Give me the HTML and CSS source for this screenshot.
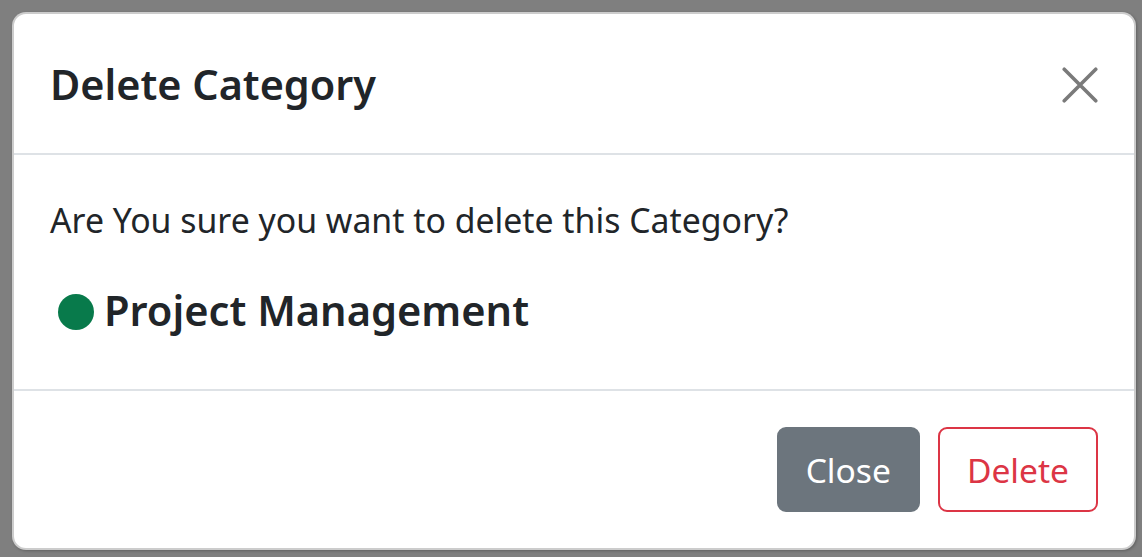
FILE: index.html
```html
<!DOCTYPE html>
<html lang="en">
<head>
<meta charset="utf-8">
<title>Delete Category</title>
<link rel="stylesheet" href="styles.css">
</head>
<body>
<div class="modal">
  <div class="modal-header">
    <h5 class="modal-title">Delete Category</h5>
    <button class="btn-close" aria-label="Close">
      <svg viewBox="0 0 16 16" width="36" height="36"><path d="M1 1L15 15M15 1L1 15" stroke="currentColor" stroke-width="1.6" stroke-linecap="round" fill="none"/></svg>
    </button>
  </div>
  <div class="modal-body">
    <p class="question">Are You sure you want to delete this Category?</p>
    <h5 class="category"><span class="dot"></span>Project Management</h5>
  </div>
  <div class="modal-footer">
    <button class="btn btn-secondary">Close</button>
    <button class="btn btn-outline-danger">Delete</button>
  </div>
</div>
</body>
</html>
```

FILE: styles.css
```css
html, body {
  margin: 0;
  padding: 0;
  background: #7f7f7f;
  height: 100%;
}
body {
  font-family: "Noto Sans", "Open Sans", sans-serif;
  color: #212529;
  padding: 12px 6px 10px 12px;
  box-sizing: border-box;
}
.modal {
  background: #fff;
  border: 2px solid rgba(0,0,0,0.2);
  border-radius: 14px;
  display: flex;
  flex-direction: column;
  box-shadow: 1px 1px 3px rgba(0,0,0,0.25);
}
.modal-header {
  display: flex;
  align-items: center;
  justify-content: space-between;
  padding: 37px 36px 35px;
  border-bottom: 2px solid #dee2e6;
}
.modal-title {
  margin: 0;
  font-size: 41.4px;
  font-weight: 600;
  line-height: 67px;
}
.btn-close {
  border: 0;
  background: none;
  padding: 0;
  width: 36px;
  height: 36px;
  color: #7a7a7a;
  display: flex;
  cursor: pointer;
}
.modal-body {
  padding: 36px;
}
.question {
  margin: 0 0 32px;
  font-size: 33.8px;
  line-height: 58px;
}
.category {
  margin: 0 0 14px;
  font-size: 41.6px;
  font-weight: 600;
  line-height: 58px;
  display: flex;
  align-items: center;
}
.dot {
  width: 36px;
  height: 36px;
  border-radius: 50%;
  background: #087a4b;
  margin-left: 8px;
  margin-right: 10px;
  margin-top: 4px;
  flex: none;
}
.modal-footer {
  display: flex;
  justify-content: flex-end;
  padding: 27px;
  border-top: 2px solid #dee2e6;
}
.btn {
  margin: 9px;
  font-family: inherit;
  font-size: 33.6px;
  line-height: 54px;
  padding: 13.5px 27px;
  border-radius: 9px;
  border: 2px solid transparent;
  cursor: pointer;
}
.btn-secondary {
  background: #6c757d;
  border-color: #6c757d;
  color: #fff;
}
.btn-outline-danger {
  background: #fff;
  border-color: #dc3545;
  color: #dc3545;
}
```
